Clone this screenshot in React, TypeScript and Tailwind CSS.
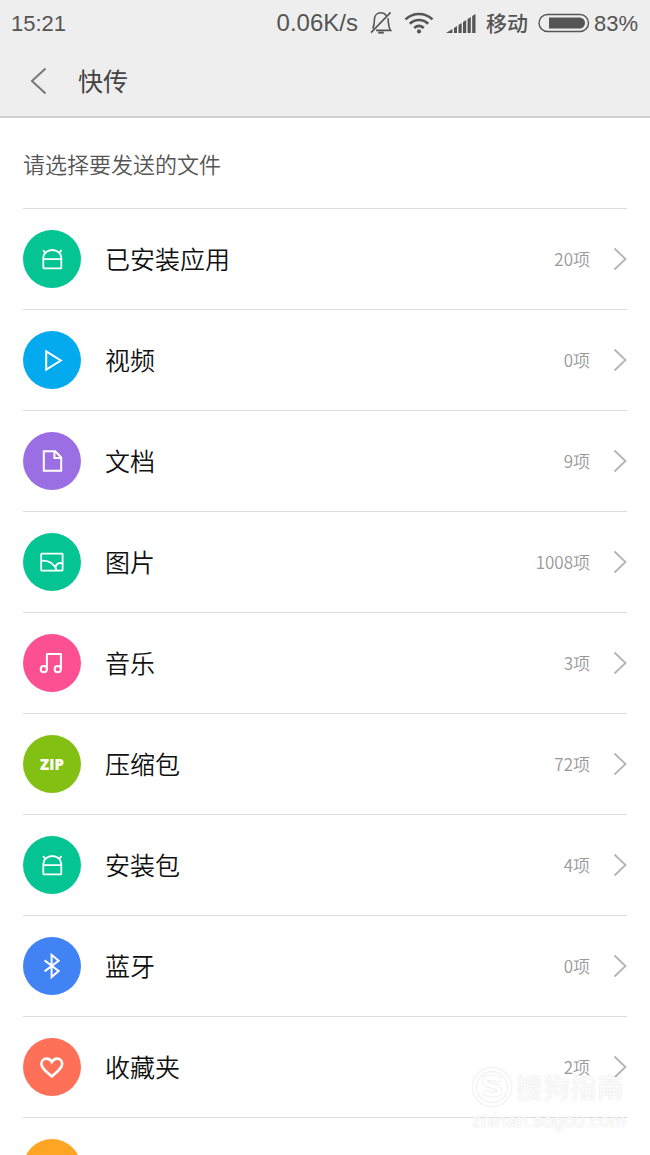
import type { ReactNode } from "react";

type Category = {
  label: string;
  count: string;
  color: string;
  icon: ReactNode;
};

function RowIcon({ children, width = 1.8 }: { children: ReactNode; width?: number }) {
  return (
    <svg viewBox="0 0 28 28" className="size-7" fill="none" stroke="white" strokeWidth={width} aria-hidden="true">
      {children}
    </svg>
  );
}

const androidIcon = (
  <RowIcon>
    <path d="M5.300 14.200h18v8.200a1 1 0 0 1-1 1h-16a1 1 0 0 1-1-1zM5.300 14.500v-1.500c0-4.600 4-8 9-8s9 3.400 9 8v1.500M7.700 8 5 5.200M20.900 8l2.700-2.800" />
  </RowIcon>
);

const categories: Category[] = [
  { label: "已安装应用", count: "20项", color: "bg-[#04c494]", icon: androidIcon },
  {
    label: "视频",
    count: "0项",
    color: "bg-[#03aaee]",
    icon: (
      <RowIcon width={2}>
        <path d="M8.200 5.400v18.200l14.600-9.100z" />
      </RowIcon>
    ),
  },
  {
    label: "文档",
    count: "9项",
    color: "bg-[#9c6ee4]",
    icon: (
      <RowIcon width={2}>
        <path d="M5.800 4.300h11.400l6 6v13.400H5.800zM16.400 4.500v6.600H23" />
      </RowIcon>
    ),
  },
  {
    label: "图片",
    count: "1008项",
    color: "bg-[#04c494]",
    icon: (
      <RowIcon>
        <rect x="3.200" y="5.600" width="21.400" height="17" rx="0.600" />
        <path d="M3.400 12.800c7-.6 12.600 3 15.400 9.600M24.400 15c-4.200-.2-6.800 1-6.600 4.600" />
      </RowIcon>
    ),
  },
  {
    label: "音乐",
    count: "3项",
    color: "bg-[#fc5093]",
    icon: (
      <RowIcon width={2}>
        <circle cx="5.800" cy="20.200" r="3.100" />
        <circle cx="19.800" cy="20.200" r="3.100" />
        <path d="M8.900 20.200V5h14v15.200" />
      </RowIcon>
    ),
  },
  {
    label: "压缩包",
    count: "72项",
    color: "bg-[#82c114]",
    icon: <span className="font-['Open_Sans',sans-serif] text-[15px] font-extrabold text-white">ZIP</span>,
  },
  { label: "安装包", count: "4项", color: "bg-[#04c494]", icon: androidIcon },
  {
    label: "蓝牙",
    count: "0项",
    color: "bg-[#4182f5]",
    icon: (
      <RowIcon width={2}>
        <path d="M6.600 8.400 20.600 19l-7 6V2.800l7 6-14 10.600" />
      </RowIcon>
    ),
  },
  {
    label: "收藏夹",
    count: "2项",
    color: "bg-[#ff7058]",
    icon: (
      <RowIcon width={2.6}>
        <path d="M13.800 23.400C8 18.600 3.400 15.200 3.400 10.800c0-3 2.200-5.200 5-5.200 2.400 0 4.200 1.200 5.400 3.400 1.200-2.200 3-3.400 5.400-3.400 2.800 0 5 2.200 5 5.200 0 4.400-4.600 7.800-10.400 12.600z" />
      </RowIcon>
    ),
  },
];

function StatusBar() {
  return (
    <div className="flex h-[46px] items-center justify-between pr-3 pl-[11px] font-['Liberation_Sans','Noto_Sans_CJK_SC',sans-serif] text-[22px] text-[#555]">
      <span>15:21</span>
      <div className="flex items-center">
        <span className="text-2xl">0.06K/s</span>
        {/* muted bell */}
        <svg viewBox="0 0 22 24" className="ml-3 h-6 w-[22px]" fill="none" stroke="currentColor" strokeWidth="1.600" aria-hidden="true">
          <path d="M1 21.600 20.600 1.400M16.200 4.600C14.800 2.600 12.800 1.800 10.800 1.800 7 1.800 4.400 4.600 4.400 8.800c0 4-.4 6.200-1.600 8.800M18 7.200c.6 5.400 0 8.400 2.600 12.200H6" />
          <path d="M8.200 21.600h5.600" strokeWidth="2" />
        </svg>
        <svg viewBox="0 0 30 22" className="ml-3 h-[22px] w-[30px]" fill="none" stroke="currentColor" strokeWidth="2.600" aria-hidden="true">
          <path d="M1.500 7.400c7.800-7.200 19.200-7.200 27 0M5.800 11.800c5.400-5 13-5 18.400 0M10.200 16c2.900-2.500 6.700-2.500 9.600 0" />
          <circle cx="15" cy="19.400" r="2.100" fill="currentColor" stroke="none" />
        </svg>
        <svg viewBox="0 0 30 20" className="ml-3 h-5 w-[30px]" fill="currentColor" aria-hidden="true">
          <path d="M0 20 6.500 16v4zM8 15l3-2v7H8zM12.500 12l3.200-2v10h-3.200zM17 9l3.200-2v13H17zM21.600 6l3.200-2v16h-3.200zM26.200 3l3.300-2v19h-3.300z" />
        </svg>
        <span className="ml-2.5 font-['Noto_Sans_CJK_SC',sans-serif] text-[21px] font-medium">移动</span>
        <svg viewBox="0 0 52 20" className="ml-2.5 h-5 w-[52px]" aria-hidden="true">
          <rect x="1" y="1.500" width="49.500" height="17" rx="8.500" fill="none" stroke="currentColor" strokeWidth="1.400" />
          <path d="M11 4.500h30.500a5.500 5.500 0 0 1 0 11H11z" fill="currentColor" />
        </svg>
        <span className="ml-1">83%</span>
      </div>
    </div>
  );
}

function CategoryRow({ label, count, color, icon }: Category) {
  return (
    <li className="border-t border-[#dcdcdc]">
      <button type="button" className="flex h-[100px] w-full items-center text-left">
        <span className={`flex size-[58px] shrink-0 items-center justify-center rounded-full ${color}`}>{icon}</span>
        <span className="ml-6 flex-1 text-[25px] font-[350] text-[#111]">{label}</span>
        <span className="text-[17px] font-[350] text-[#999]">{count}</span>
        <svg viewBox="0 0 14 24" className="ml-[23px] h-6 w-3.5" fill="none" stroke="#b4b4b4" strokeWidth="1.800" aria-hidden="true">
          <path d="M1.500 1.500 12.500 12l-11 10.500" />
        </svg>
      </button>
    </li>
  );
}

function Watermark() {
  return (
    <div className="pointer-events-none absolute right-6 bottom-5 text-white/80 [text-shadow:0_0_2px_rgba(0,0,0,0.14)]">
      <div className="flex items-center gap-1">
        <svg viewBox="0 0 40 40" className="size-10 drop-shadow-[0_0_1px_rgba(0,0,0,0.16)]" fill="none" stroke="white" aria-hidden="true">
          <circle cx="20" cy="20" r="17.500" strokeWidth="3" />
          <path d="M28 13c-6-3-15-3-15 1.500 0 5 14.500 3.500 14.500 9 0 5-9.500 5-15.500 2" strokeWidth="4" />
        </svg>
        <span className="text-[27px] leading-8">搜狗指南</span>
      </div>
      <div className="text-right font-['Liberation_Sans',sans-serif] text-[19px] leading-7">zhinan.sogou.com</div>
    </div>
  );
}

export default function App() {
  return (
    <div className="relative flex h-screen flex-col overflow-hidden bg-white font-['Noto_Sans_CJK_SC',sans-serif]">
      <header className="shrink-0 border-b-2 border-[#d0d0d0] bg-[#eee]">
        <StatusBar />
        <div className="flex h-[70px] items-center pl-[30px]">
          <button type="button" aria-label="返回" className="text-[#777]">
            <svg viewBox="0 0 18 28" className="h-7 w-[18px]" fill="none" stroke="currentColor" strokeWidth="2">
              <path d="M15.500 1.500 2 14l13.500 12.500" />
            </svg>
          </button>
          <h1 className="ml-[30px] text-[25px] font-normal text-[#444]">快传</h1>
        </div>
      </header>
      <main className="min-h-0 flex-1 overflow-hidden px-[23px]">
        <h2 className="flex h-[90px] items-center text-[22px] font-[350] text-[#555]">请选择要发送的文件</h2>
        <ul>
          {categories.map((item) => (
            <CategoryRow key={item.label} {...item} />
          ))}
          <li className="flex h-[101px] items-center border-t border-[#dcdcdc]">
            <span className="size-[58px] rounded-full bg-[#ffa524]" />
          </li>
        </ul>
      </main>
      <Watermark />
    </div>
  );
}
